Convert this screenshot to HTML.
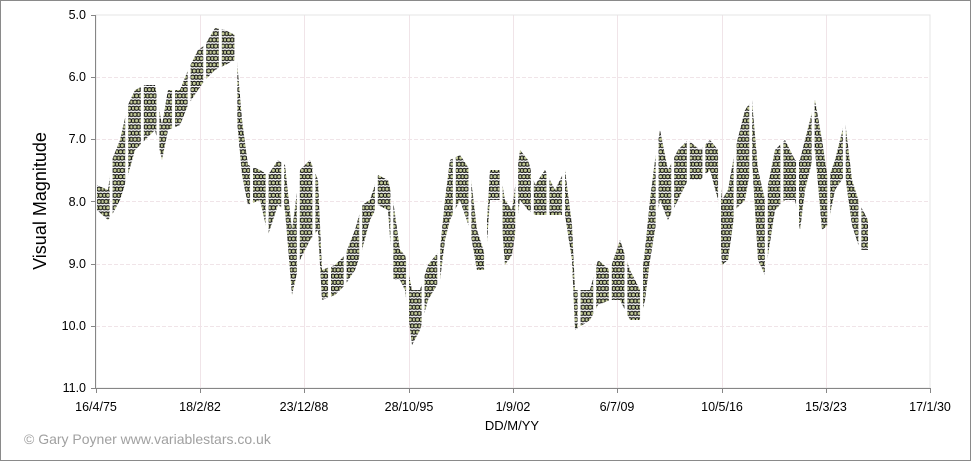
<!DOCTYPE html>
<html><head><meta charset="utf-8"><style>
html,body{margin:0;padding:0;background:#fff}
svg{display:block}
text{font-family:"Liberation Sans",sans-serif}
</style></head><body>
<svg width="971" height="461" xmlns="http://www.w3.org/2000/svg">
<defs>
<pattern id="dots" patternUnits="userSpaceOnUse" x="0" y="11.89" width="7.2" height="12.434">
<g fill="#c3cb98" stroke="#151515" stroke-width="1.1">
<circle cx="1.8" cy="3.11" r="2.1"/><circle cx="9.0" cy="3.11" r="2.1"/>
<circle cx="5.4" cy="3.11" r="2.1"/><circle cx="-1.8" cy="3.11" r="2.1"/>
<circle cx="3.6" cy="9.33" r="2.1"/>
<circle cx="7.0" cy="9.33" r="2.1"/><circle cx="-0.2" cy="9.33" r="2.1"/>
</g>
</pattern>
<pattern id="gap" patternUnits="userSpaceOnUse" x="97" y="0" width="15.6" height="461">
<rect x="0" y="0" width="12.6" height="461" fill="#fff"/>
</pattern>
<mask id="m" maskUnits="userSpaceOnUse" x="0" y="0" width="971" height="461">
<rect x="0" y="0" width="971" height="461" fill="url(#gap)"/>
</mask>
</defs>
<rect x="0.5" y="0.5" width="970" height="460" fill="#fff" stroke="#8a8a8a"/>
<g stroke="#f0e4e8" stroke-width="1">
<line x1="200.5" y1="15" x2="200.5" y2="388"/><line x1="304.5" y1="15" x2="304.5" y2="388"/><line x1="409.5" y1="15" x2="409.5" y2="388"/><line x1="513.5" y1="15" x2="513.5" y2="388"/><line x1="617.5" y1="15" x2="617.5" y2="388"/><line x1="722.5" y1="15" x2="722.5" y2="388"/><line x1="826.5" y1="15" x2="826.5" y2="388"/>
<g stroke-dasharray="4,2"><line x1="96" y1="77.5" x2="930" y2="77.5"/><line x1="96" y1="139.5" x2="930" y2="139.5"/><line x1="96" y1="201.5" x2="930" y2="201.5"/><line x1="96" y1="264.5" x2="930" y2="264.5"/><line x1="96" y1="326.5" x2="930" y2="326.5"/></g>
</g>
<rect x="96" y="15" width="834" height="373" fill="none" stroke="#e4e4e4"/>
<g stroke="#868686" stroke-width="1">
<line x1="95.5" y1="15" x2="95.5" y2="388"/><line x1="96" y1="388.5" x2="930" y2="388.5"/>
<line x1="91" y1="15.5" x2="96" y2="15.5"/><line x1="91" y1="77.5" x2="96" y2="77.5"/><line x1="91" y1="139.5" x2="96" y2="139.5"/><line x1="91" y1="201.5" x2="96" y2="201.5"/><line x1="91" y1="264.5" x2="96" y2="264.5"/><line x1="91" y1="326.5" x2="96" y2="326.5"/><line x1="91" y1="388.5" x2="96" y2="388.5"/>
<line x1="96.5" y1="388" x2="96.5" y2="393"/><line x1="200.5" y1="388" x2="200.5" y2="393"/><line x1="304.5" y1="388" x2="304.5" y2="393"/><line x1="409.5" y1="388" x2="409.5" y2="393"/><line x1="513.5" y1="388" x2="513.5" y2="393"/><line x1="617.5" y1="388" x2="617.5" y2="393"/><line x1="722.5" y1="388" x2="722.5" y2="393"/><line x1="826.5" y1="388" x2="826.5" y2="393"/><line x1="930.5" y1="388" x2="930.5" y2="393"/>
</g>
<g font-size="12.5" fill="#000" text-anchor="end">
<text x="86" y="19">5.0</text><text x="86" y="81">6.0</text><text x="86" y="143">7.0</text><text x="86" y="206">8.0</text><text x="86" y="268">9.0</text><text x="86" y="330">10.0</text><text x="86" y="392">11.0</text>
</g>
<g font-size="12.5" fill="#000" text-anchor="middle">
<text x="96" y="411">16/4/75</text><text x="200" y="411">18/2/82</text><text x="304" y="411">23/12/88</text><text x="409" y="411">28/10/95</text><text x="513" y="411">1/9/02</text><text x="617" y="411">6/7/09</text><text x="722" y="411">10/5/16</text><text x="826" y="411">15/3/23</text><text x="930" y="411">17/1/30</text>
</g>
<text x="46" y="201" font-size="18" text-anchor="middle" transform="rotate(-90 46 201)">Visual Magnitude</text>
<text x="512" y="430" font-size="13" text-anchor="middle">DD/M/YY</text>
<text x="24" y="444" font-size="14" fill="#a0a0a0">© Gary Poyner www.variablestars.co.uk</text>
<polygon mask="url(#m)" fill="url(#dots)" points="97,185 108,190 112,160 120,140 128,105 135,90 145,85 155,85 162,125 168,90 180,90 188,70 198,50 205,45 215,28 225,30 235,35 237,60 242,120 248,165 260,170 268,175 278,160 285,165 292,230 300,170 310,160 318,180 322,270 335,265 345,255 355,230 362,205 370,200 378,175 388,180 393,200 400,250 405,255 412,290 420,290 428,265 440,250 445,200 450,160 460,155 470,170 477,230 485,255 490,170 500,170 505,200 512,210 520,150 528,160 535,185 545,170 555,190 565,170 572,225 575,290 590,290 598,260 610,270 620,240 630,270 640,290 645,250 650,200 655,160 660,130 668,170 678,150 688,140 700,150 710,140 718,150 722,200 728,190 735,150 745,110 752,100 758,170 765,200 775,150 785,140 795,160 800,160 805,140 815,100 822,140 828,180 835,160 845,120 852,180 860,205 868,220 868,250 860,250 852,225 845,175 835,190 828,225 822,230 815,150 805,190 800,230 795,200 785,200 775,210 765,275 758,260 752,160 745,200 735,210 728,260 722,265 718,200 710,170 700,180 688,180 678,200 668,220 660,200 655,230 650,260 645,300 640,320 630,320 620,300 610,300 598,305 590,320 575,330 572,260 565,215 555,215 545,215 535,215 528,210 520,200 512,255 505,265 500,200 490,200 485,270 477,270 470,230 460,200 450,220 445,240 440,280 428,300 420,330 412,345 405,290 400,280 393,280 388,210 378,205 370,220 362,250 355,270 345,285 335,295 322,300 318,230 310,240 300,260 292,295 285,210 278,205 268,235 260,200 248,205 242,175 237,120 235,60 225,65 215,70 205,80 198,90 188,105 180,125 168,130 162,160 155,130 145,140 135,150 128,175 120,200 112,215 108,220 97,210"/>
</svg>
</body></html>
